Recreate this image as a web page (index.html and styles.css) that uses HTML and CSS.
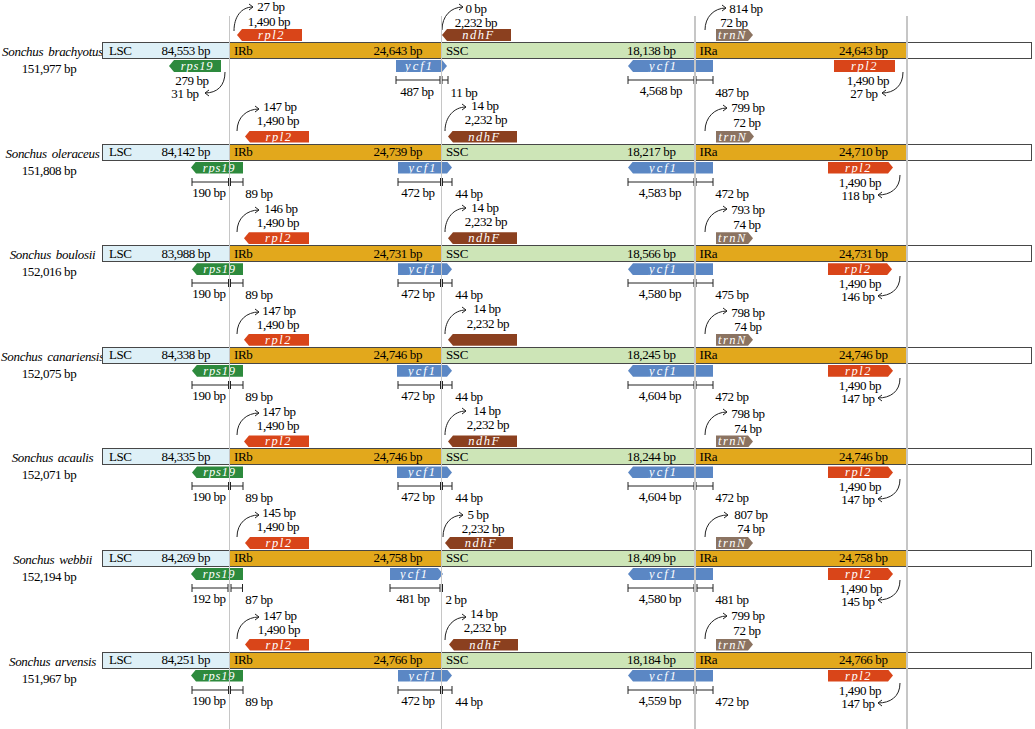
FILE: index.html
```html
<!DOCTYPE html>
<html>
<head>
<meta charset="utf-8">
<link rel="stylesheet" href="styles.css">
</head>
<body>
<div class="diagram">

  <!-- Row 1 -->
  <div class="row">
    <div class="name"><i>Sonchus brachyotus</i><span>151,977 bp</span></div>
    <div class="bar">
      <div class="seg lsc"><span>LSC</span><span>84,553 bp</span></div>
      <div class="seg ir"><span>IRb</span><span>24,643 bp</span></div>
      <div class="seg ssc"><span>SSC</span><span>18,138 bp</span></div>
      <div class="seg ir"><span>IRa</span><span>24,643 bp</span></div>
      <div class="seg tail"></div>
    </div>
    <svg class="marks" viewBox="0 0 1035 102">
      <path d="M234 31 C234 17 241 7 253 7 M249 4 L253 7 L249 10"/>
      <path d="M442 30 C442 16 451 7 463 7 M459 4 L463 7 L459 10"/>
      <path d="M705 30 C705 17 714 8 726 8 M722 5 L726 8 L722 11"/>
      <path d="M225 72 C225 86 217 93 205 93 M209 90 L205 93 L209 96"/>
      <path d="M903 72 C903 86 894 93 882 93 M886 90 L882 93 L886 96"/>
      <path d="M396 80 H440 M396 76 V84 M440 76 V84 M442 80 H448 M442 76 V84 M448 76 V84"/>
      <path d="M628 80 H694 M628 76 V84 M694 76 V84 M696 80 H713 M696 76 V84 M713 76 V84"/>
    </svg>
    <div class="gene top lp rpl2" style="left:237px;width:65px">rpl2</div>
    <div class="gene top lp ndhf" style="left:442px;width:69px">ndhF</div>
    <div class="gene top rp trnn" style="left:716px;width:37px">trnN</div>
    <div class="gene bot lp rps19" style="left:169px;width:52px">rps19</div>
    <div class="gene bot rp ycf1" style="left:396px;width:51px">ycf1</div>
    <div class="gene bot lp ycf1 wide" style="left:628px;width:85px">ycf1</div>
    <div class="gene bot rpl2" style="left:834px;width:61px">rpl2</div>
    <span class="lbl" style="left:271px;top:6px">27 bp</span>
    <span class="lbl" style="left:269px;top:20.5px">1,490 bp</span>
    <span class="lbl" style="left:476px;top:7.5px">0 bp</span>
    <span class="lbl" style="left:476px;top:21.5px">2,232 bp</span>
    <span class="lbl" style="left:746px;top:7.5px">814 bp</span>
    <span class="lbl" style="left:734px;top:21.5px">72 bp</span>
    <span class="lbl" style="left:192px;top:80px">279 bp</span>
    <span class="lbl" style="left:185px;top:93px">31 bp</span>
    <span class="lbl" style="left:417px;top:91px">487 bp</span>
    <span class="lbl" style="left:464px;top:92px">11 bp</span>
    <span class="lbl" style="left:661px;top:90px">4,568 bp</span>
    <span class="lbl" style="left:732px;top:92px">487 bp</span>
    <span class="lbl" style="left:868px;top:80px">1,490 bp</span>
    <span class="lbl" style="left:864px;top:93px">27 bp</span>
  </div>

  <!-- Row 2 -->
  <div class="row">
    <div class="name"><i>Sonchus oleraceus</i><span>151,808 bp</span></div>
    <div class="bar">
      <div class="seg lsc"><span>LSC</span><span>84,142 bp</span></div>
      <div class="seg ir"><span>IRb</span><span>24,739 bp</span></div>
      <div class="seg ssc"><span>SSC</span><span>18,217 bp</span></div>
      <div class="seg ir"><span>IRa</span><span>24,710 bp</span></div>
      <div class="seg tail"></div>
    </div>
    <svg class="marks" viewBox="0 0 1035 102">
      <path d="M237 29 C237 15 247 7 259 7 M255 4 L259 7 L255 10"/>
      <path d="M445 29 C445 15 454 5 466 5 M462 2 L466 5 L462 8"/>
      <path d="M705 29 C705 15 715 6 727 6 M723 3 L727 6 L723 9"/>
      <path d="M900 73 C900 87 890 93 878 93 M882 90 L878 93 L882 96"/>
      <path d="M192 80 H228.5 M192 76 V84 M228.5 76 V84 M230.5 80 H243 M230.5 76 V84 M243 76 V84"/>
      <path d="M398 80 H440.5 M398 76 V84 M440.5 76 V84 M442.5 80 H452 M442.5 76 V84 M452 76 V84"/>
      <path d="M628 80 H694 M628 76 V84 M694 76 V84 M696 80 H713 M696 76 V84 M713 76 V84"/>
    </svg>
    <div class="gene top lp rpl2" style="left:245px;width:64px">rpl2</div>
    <div class="gene top lp ndhf" style="left:448px;width:69px">ndhF</div>
    <div class="gene top rp trnn" style="left:716px;width:38px">trnN</div>
    <div class="gene bot lp rps19" style="left:191px;width:52px">rps19</div>
    <div class="gene bot rp ycf1" style="left:398px;width:54px">ycf1</div>
    <div class="gene bot lp ycf1 wide" style="left:628px;width:85px">ycf1</div>
    <div class="gene bot rp rpl2" style="left:828px;width:65px">rpl2</div>
    <span class="lbl" style="left:280px;top:4.5px">147 bp</span>
    <span class="lbl" style="left:278px;top:18.5px">1,490 bp</span>
    <span class="lbl" style="left:485px;top:3.5px">14 bp</span>
    <span class="lbl" style="left:486px;top:17.5px">2,232 bp</span>
    <span class="lbl" style="left:748px;top:5.5px">799 bp</span>
    <span class="lbl" style="left:747px;top:20.5px">72 bp</span>
    <span class="lbl" style="left:209px;top:90px">190 bp</span>
    <span class="lbl" style="left:259px;top:91px">89 bp</span>
    <span class="lbl" style="left:418px;top:90px">472 bp</span>
    <span class="lbl" style="left:469px;top:91px">44 bp</span>
    <span class="lbl" style="left:660px;top:90px">4,583 bp</span>
    <span class="lbl" style="left:732px;top:91px">472 bp</span>
    <span class="lbl" style="left:860px;top:80px">1,490 bp</span>
    <span class="lbl" style="left:858px;top:93px">118 bp</span>
  </div>

  <!-- Row 3 -->
  <div class="row">
    <div class="name"><i>Sonchus boulosii</i><span>152,016 bp</span></div>
    <div class="bar">
      <div class="seg lsc"><span>LSC</span><span>83,988 bp</span></div>
      <div class="seg ir"><span>IRb</span><span>24,731 bp</span></div>
      <div class="seg ssc"><span>SSC</span><span>18,566 bp</span></div>
      <div class="seg ir"><span>IRa</span><span>24,731 bp</span></div>
      <div class="seg tail"></div>
    </div>
    <svg class="marks" viewBox="0 0 1035 102">
      <path d="M237 29 C237 15 247 7 259 7 M255 4 L259 7 L255 10"/>
      <path d="M445 29 C445 15 454 5 466 5 M462 2 L466 5 L462 8"/>
      <path d="M705 29 C705 15 715 6 727 6 M723 3 L727 6 L723 9"/>
      <path d="M900 73 C900 87 890 93 878 93 M882 90 L878 93 L882 96"/>
      <path d="M192 80 H228.5 M192 76 V84 M228.5 76 V84 M230.5 80 H243 M230.5 76 V84 M243 76 V84"/>
      <path d="M398 80 H440.5 M398 76 V84 M440.5 76 V84 M442.5 80 H452 M442.5 76 V84 M452 76 V84"/>
      <path d="M628 80 H694 M628 76 V84 M694 76 V84 M696 80 H713 M696 76 V84 M713 76 V84"/>
    </svg>
    <div class="gene top lp rpl2" style="left:244px;width:65px">rpl2</div>
    <div class="gene top lp ndhf" style="left:448px;width:69px">ndhF</div>
    <div class="gene top rp trnn" style="left:716px;width:37px">trnN</div>
    <div class="gene bot lp rps19" style="left:192px;width:51px">rps19</div>
    <div class="gene bot rp ycf1" style="left:398px;width:54px">ycf1</div>
    <div class="gene bot lp ycf1 wide" style="left:628px;width:85px">ycf1</div>
    <div class="gene bot rp rpl2" style="left:828px;width:64px">rpl2</div>
    <span class="lbl" style="left:281px;top:4.5px">146 bp</span>
    <span class="lbl" style="left:278px;top:18.5px">1,490 bp</span>
    <span class="lbl" style="left:485px;top:3.5px">14 bp</span>
    <span class="lbl" style="left:486px;top:17.5px">2,232 bp</span>
    <span class="lbl" style="left:748px;top:5.5px">793 bp</span>
    <span class="lbl" style="left:747px;top:20.5px">74 bp</span>
    <span class="lbl" style="left:209px;top:90px">190 bp</span>
    <span class="lbl" style="left:259px;top:91px">89 bp</span>
    <span class="lbl" style="left:418px;top:90px">472 bp</span>
    <span class="lbl" style="left:469px;top:91px">44 bp</span>
    <span class="lbl" style="left:660px;top:90px">4,580 bp</span>
    <span class="lbl" style="left:732px;top:91px">475 bp</span>
    <span class="lbl" style="left:860px;top:80px">1,490 bp</span>
    <span class="lbl" style="left:858px;top:93px">146 bp</span>
  </div>

  <!-- Row 4 -->
  <div class="row">
    <div class="name"><i>Sonchus canariensis</i><span>152,075 bp</span></div>
    <div class="bar">
      <div class="seg lsc"><span>LSC</span><span>84,338 bp</span></div>
      <div class="seg ir"><span>IRb</span><span>24,746 bp</span></div>
      <div class="seg ssc"><span>SSC</span><span>18,245 bp</span></div>
      <div class="seg ir"><span>IRa</span><span>24,746 bp</span></div>
      <div class="seg tail"></div>
    </div>
    <svg class="marks" viewBox="0 0 1035 102">
      <path d="M237 29 C237 15 247 7 259 7 M255 4 L259 7 L255 10"/>
      <path d="M445 29 C445 15 454 5 466 5 M462 2 L466 5 L462 8"/>
      <path d="M705 29 C705 15 715 6 727 6 M723 3 L727 6 L723 9"/>
      <path d="M900 73 C900 87 890 93 878 93 M882 90 L878 93 L882 96"/>
      <path d="M192 80 H228.5 M192 76 V84 M228.5 76 V84 M230.5 80 H243 M230.5 76 V84 M243 76 V84"/>
      <path d="M398 80 H440.5 M398 76 V84 M440.5 76 V84 M442.5 80 H452 M442.5 76 V84 M452 76 V84"/>
      <path d="M628 80 H694 M628 76 V84 M694 76 V84 M696 80 H713 M696 76 V84 M713 76 V84"/>
    </svg>
    <div class="gene top lp rpl2" style="left:244px;width:65px">rpl2</div>
    <div class="gene top lp ndhf" style="left:448px;width:69px"></div>
    <div class="gene top rp trnn" style="left:716px;width:37px">trnN</div>
    <div class="gene bot lp rps19" style="left:192px;width:51px">rps19</div>
    <div class="gene bot rp ycf1" style="left:397px;width:55px">ycf1</div>
    <div class="gene bot lp ycf1 wide" style="left:628px;width:85px">ycf1</div>
    <div class="gene bot rp rpl2" style="left:828px;width:65px">rpl2</div>
    <span class="lbl" style="left:279px;top:5px">147 bp</span>
    <span class="lbl" style="left:278px;top:19px">1,490 bp</span>
    <span class="lbl" style="left:487px;top:3.5px">14 bp</span>
    <span class="lbl" style="left:488px;top:18px">2,232 bp</span>
    <span class="lbl" style="left:748px;top:7px">798 bp</span>
    <span class="lbl" style="left:748px;top:21.5px">74 bp</span>
    <span class="lbl" style="left:209px;top:90px">190 bp</span>
    <span class="lbl" style="left:259px;top:91px">89 bp</span>
    <span class="lbl" style="left:418px;top:90px">472 bp</span>
    <span class="lbl" style="left:469px;top:91px">44 bp</span>
    <span class="lbl" style="left:660px;top:90px">4,604 bp</span>
    <span class="lbl" style="left:732px;top:91px">472 bp</span>
    <span class="lbl" style="left:860px;top:80px">1,490 bp</span>
    <span class="lbl" style="left:858px;top:93px">147 bp</span>
  </div>

  <!-- Row 5 -->
  <div class="row">
    <div class="name"><i>Sonchus acaulis</i><span>152,071 bp</span></div>
    <div class="bar">
      <div class="seg lsc"><span>LSC</span><span>84,335 bp</span></div>
      <div class="seg ir"><span>IRb</span><span>24,746 bp</span></div>
      <div class="seg ssc"><span>SSC</span><span>18,244 bp</span></div>
      <div class="seg ir"><span>IRa</span><span>24,746 bp</span></div>
      <div class="seg tail"></div>
    </div>
    <svg class="marks" viewBox="0 0 1035 102">
      <path d="M237 29 C237 15 247 7 259 7 M255 4 L259 7 L255 10"/>
      <path d="M445 29 C445 15 454 5 466 5 M462 2 L466 5 L462 8"/>
      <path d="M705 29 C705 15 715 6 727 6 M723 3 L727 6 L723 9"/>
      <path d="M900 73 C900 87 890 93 878 93 M882 90 L878 93 L882 96"/>
      <path d="M192 80 H228.5 M192 76 V84 M228.5 76 V84 M230.5 80 H243 M230.5 76 V84 M243 76 V84"/>
      <path d="M398 80 H440.5 M398 76 V84 M440.5 76 V84 M442.5 80 H452 M442.5 76 V84 M452 76 V84"/>
      <path d="M628 80 H694 M628 76 V84 M694 76 V84 M696 80 H713 M696 76 V84 M713 76 V84"/>
    </svg>
    <div class="gene top lp rpl2" style="left:244px;width:65px">rpl2</div>
    <div class="gene top lp ndhf" style="left:448px;width:69px">ndhF</div>
    <div class="gene top rp trnn" style="left:716px;width:37px">trnN</div>
    <div class="gene bot lp rps19" style="left:192px;width:51px">rps19</div>
    <div class="gene bot rp ycf1" style="left:397px;width:55px">ycf1</div>
    <div class="gene bot lp ycf1 wide" style="left:628px;width:85px">ycf1</div>
    <div class="gene bot rp rpl2" style="left:828px;width:65px">rpl2</div>
    <span class="lbl" style="left:279px;top:5px">147 bp</span>
    <span class="lbl" style="left:278px;top:19px">1,490 bp</span>
    <span class="lbl" style="left:487px;top:3.5px">14 bp</span>
    <span class="lbl" style="left:488px;top:18px">2,232 bp</span>
    <span class="lbl" style="left:748px;top:7px">798 bp</span>
    <span class="lbl" style="left:748px;top:21.5px">74 bp</span>
    <span class="lbl" style="left:209px;top:90px">190 bp</span>
    <span class="lbl" style="left:259px;top:91px">89 bp</span>
    <span class="lbl" style="left:418px;top:90px">472 bp</span>
    <span class="lbl" style="left:469px;top:91px">44 bp</span>
    <span class="lbl" style="left:660px;top:90px">4,604 bp</span>
    <span class="lbl" style="left:732px;top:91px">472 bp</span>
    <span class="lbl" style="left:860px;top:80px">1,490 bp</span>
    <span class="lbl" style="left:858px;top:93px">147 bp</span>
  </div>

  <!-- Row 6 -->
  <div class="row">
    <div class="name"><i>Sonchus webbii</i><span>152,194 bp</span></div>
    <div class="bar">
      <div class="seg lsc"><span>LSC</span><span>84,269 bp</span></div>
      <div class="seg ir"><span>IRb</span><span>24,758 bp</span></div>
      <div class="seg ssc"><span>SSC</span><span>18,409 bp</span></div>
      <div class="seg ir"><span>IRa</span><span>24,758 bp</span></div>
      <div class="seg tail"></div>
    </div>
    <svg class="marks" viewBox="0 0 1035 102">
      <path d="M237 29 C237 15 247 7 259 7 M255 4 L259 7 L255 10"/>
      <path d="M443 29 C443 16 451 7 463 7 M459 4 L463 7 L459 10"/>
      <path d="M705 29 C705 15 715 7 728 7 M724 4 L728 7 L724 10"/>
      <path d="M900 72 C900 86 890 92 878 92 M882 89 L878 92 L882 95"/>
      <path d="M192 80 H228 M192 76 V84 M228 76 V84 M231 80 H242.5 M231 76 V84 M242.5 76 V84"/>
      <path d="M390 80 H440 M390 76 V84 M440 76 V84 M442.5 76 V84"/>
      <path d="M628 80 H694 M628 76 V84 M694 76 V84 M697 80 H713 M697 76 V84 M713 76 V84"/>
    </svg>
    <div class="gene top lp rpl2" style="left:245px;width:64px">rpl2</div>
    <div class="gene top lp ndhf" style="left:445px;width:68px">ndhF</div>
    <div class="gene top rp trnn" style="left:716px;width:37px">trnN</div>
    <div class="gene bot lp rps19" style="left:191px;width:52px">rps19</div>
    <div class="gene bot rp ycf1" style="left:390px;width:53px">ycf1</div>
    <div class="gene bot lp ycf1 wide" style="left:628px;width:85px">ycf1</div>
    <div class="gene bot rp rpl2" style="left:828px;width:65px">rpl2</div>
    <span class="lbl" style="left:279px;top:4px">145 bp</span>
    <span class="lbl" style="left:278px;top:18.5px">1,490 bp</span>
    <span class="lbl" style="left:478px;top:6px">5 bp</span>
    <span class="lbl" style="left:483px;top:20px">2,232 bp</span>
    <span class="lbl" style="left:751px;top:6px">807 bp</span>
    <span class="lbl" style="left:751px;top:20px">74 bp</span>
    <span class="lbl" style="left:209px;top:90px">192 bp</span>
    <span class="lbl" style="left:259px;top:91px">87 bp</span>
    <span class="lbl" style="left:413px;top:90px">481 bp</span>
    <span class="lbl" style="left:456px;top:91px">2 bp</span>
    <span class="lbl" style="left:660px;top:90px">4,580 bp</span>
    <span class="lbl" style="left:732px;top:91px">481 bp</span>
    <span class="lbl" style="left:861px;top:80px">1,490 bp</span>
    <span class="lbl" style="left:858px;top:93px">145 bp</span>
  </div>

  <!-- Row 7 -->
  <div class="row">
    <div class="name"><i>Sonchus arvensis</i><span>151,967 bp</span></div>
    <div class="bar">
      <div class="seg lsc"><span>LSC</span><span>84,251 bp</span></div>
      <div class="seg ir"><span>IRb</span><span>24,766 bp</span></div>
      <div class="seg ssc"><span>SSC</span><span>18,184 bp</span></div>
      <div class="seg ir"><span>IRa</span><span>24,766 bp</span></div>
      <div class="seg tail"></div>
    </div>
    <svg class="marks" viewBox="0 0 1035 102">
      <path d="M237 29 C237 15 247 7 259 7 M255 4 L259 7 L255 10"/>
      <path d="M445 30 C445 16 454 7 466 7 M462 4 L466 7 L462 10"/>
      <path d="M705 29 C705 15 715 6 727 6 M723 3 L727 6 L723 9"/>
      <path d="M900 73 C900 87 890 93 878 93 M882 90 L878 93 L882 96"/>
      <path d="M192 80 H228.5 M192 76 V84 M228.5 76 V84 M230.5 80 H243 M230.5 76 V84 M243 76 V84"/>
      <path d="M398 80 H440.5 M398 76 V84 M440.5 76 V84 M442.5 80 H452 M442.5 76 V84 M452 76 V84"/>
      <path d="M628 80 H694 M628 76 V84 M694 76 V84 M696 80 H713 M696 76 V84 M713 76 V84"/>
    </svg>
    <div class="gene top lp rpl2" style="left:245px;width:64px">rpl2</div>
    <div class="gene top lp ndhf" style="left:449px;width:69px">ndhF</div>
    <div class="gene top rp trnn" style="left:716px;width:37px">trnN</div>
    <div class="gene bot lp rps19" style="left:191px;width:52px">rps19</div>
    <div class="gene bot rp ycf1" style="left:398px;width:54px">ycf1</div>
    <div class="gene bot lp ycf1 wide" style="left:628px;width:85px">ycf1</div>
    <div class="gene bot rp rpl2" style="left:828px;width:65px">rpl2</div>
    <span class="lbl" style="left:280px;top:5.5px">147 bp</span>
    <span class="lbl" style="left:279px;top:19.5px">1,490 bp</span>
    <span class="lbl" style="left:484px;top:3.5px">14 bp</span>
    <span class="lbl" style="left:485px;top:17.5px">2,232 bp</span>
    <span class="lbl" style="left:748px;top:5.5px">799 bp</span>
    <span class="lbl" style="left:747px;top:20.5px">72 bp</span>
    <span class="lbl" style="left:209px;top:90px">190 bp</span>
    <span class="lbl" style="left:259px;top:91px">89 bp</span>
    <span class="lbl" style="left:418px;top:90px">472 bp</span>
    <span class="lbl" style="left:469px;top:91px">44 bp</span>
    <span class="lbl" style="left:660px;top:90px">4,559 bp</span>
    <span class="lbl" style="left:732px;top:91px">472 bp</span>
    <span class="lbl" style="left:860px;top:80px">1,490 bp</span>
    <span class="lbl" style="left:858px;top:93px">147 bp</span>
  </div>

  <div class="guide g1"></div>
  <div class="guide g2"></div>
  <div class="guide g3"></div>
  <div class="guide g4"></div>
</div>
</body>
</html>
```

FILE: styles.css
```css
* { box-sizing: border-box; }

body {
  margin: 0;
  background: #ffffff;
  font-family: "Liberation Serif", "Times New Roman", serif;
  font-size: 13px;
  letter-spacing: -0.4px;
  color: #000000;
}

.diagram {
  position: relative;
  width: 1035px;
  height: 729px;
  overflow: hidden;
}

.row {
  position: relative;
  height: 101.6px;
  display: grid;
  grid-template-columns: 102px 930px;
  align-items: start;
}

.name {
  padding-top: 43px;
  display: flex;
  flex-direction: column;
  align-items: center;
  line-height: 17px;
  white-space: nowrap;
}

.name i {
  letter-spacing: -0.3px;
  word-spacing: 2px;
  margin-left: 3px;
}

.name span {
  margin-left: -4px;
}

.bar {
  margin-top: 42px;
  height: 17px;
  border: 1.5px solid #474747;
  display: flex;
}

.seg {
  display: flex;
  justify-content: space-between;
  align-items: center;
  padding: 0 19px 0 5px;
  line-height: 14px;
  white-space: nowrap;
}

.lsc { width: 126px; background: #def0f7; padding-left: 6px; }
.ir  { width: 212px; background: #e2a81c; }
.ssc { width: 253.5px; background: #cde5b7; }
.tail { flex: 1; background: #ffffff; }

.marks {
  position: absolute;
  left: 0;
  top: 0;
  width: 1035px;
  height: 102px;
  overflow: visible;
  fill: none;
  stroke: #222222;
  stroke-width: 1;
}

.gene {
  position: absolute;
  height: 12px;
  color: #ffffff;
  font-style: italic;
  font-size: 12.5px;
  line-height: 12px;
  text-align: center;
  letter-spacing: 1.5px;
  white-space: nowrap;
  z-index: 1;
}

.gene.top { top: 29px; }
.gene.bot { top: 60px; }

.gene.lp {
  clip-path: polygon(5px 0, 100% 0, 100% 100%, 5px 100%, 0 50%);
  padding-left: 4px;
}

.gene.rp {
  clip-path: polygon(0 0, calc(100% - 5px) 0, 100% 50%, calc(100% - 5px) 100%, 0 100%);
  padding-right: 4px;
}

.gene.wide { padding-right: 18px; }

.rpl2 { background: #d94519; }
.ndhf { background: #8b401f; }
.trnn { background: #8b7361; }
.rps19 { background: #2d8a3d; letter-spacing: 0.8px; }
.ycf1 { background: #5b87c4; letter-spacing: 2px; }

.lbl {
  position: absolute;
  transform: translate(-50%, -50%);
  white-space: nowrap;
  line-height: 1;
}

.guide {
  position: absolute;
  top: 16px;
  bottom: 0;
  width: 1.5px;
  background: #c6c6c6;
  z-index: 3;
}

.g1 { left: 228.8px; }
.g2 { left: 440.8px; }
.g3 { left: 694.4px; }
.g4 { left: 906px; }
```
